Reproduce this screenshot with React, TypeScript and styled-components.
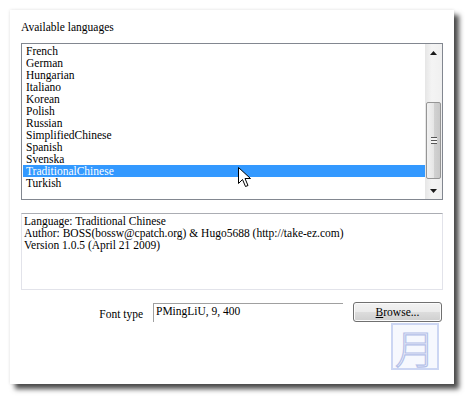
import styled, { createGlobalStyle } from "styled-components"

const GlobalStyle = createGlobalStyle`
  html, body {
    margin: 0;
    padding: 0;
    background: #ffffff;
  }
  body {
    font-family: "Liberation Serif", "Noto Sans CJK TC", serif;
    font-size: 11.5px;
    color: #000;
  }
`

const Stage = styled.div`
  position: relative;
  width: 465px;
  height: 396px;
  padding: 10px 0 0 10px;
  box-sizing: border-box;
`

const Panel = styled.div`
  width: 444px;
  height: 374px;
  box-sizing: border-box;
  padding: 10px 11px 0 11px;
  background: #ffffff;
  box-shadow: 0 0 3px rgba(0, 0, 0, 0.12), 5px 5px 5px rgba(0, 0, 0, 0.7);
  display: flex;
  flex-direction: column;
`

const Title = styled.div`
  line-height: 14px;
  margin-bottom: 9px;
`

const ListBox = styled.div`
  height: 157px;
  border: 1px solid #828790;
  box-sizing: border-box;
  display: flex;
`

const Items = styled.div`
  flex: 1;
  padding: 1px 0 0 1px;
`

const Item = styled.div<{ $selected?: boolean }>`
  height: 12px;
  line-height: 12px;
  padding-left: 3px;
  white-space: nowrap;
  background: ${(p) => (p.$selected ? "#3399ff" : "transparent")};
  color: ${(p) => (p.$selected ? "#ffffff" : "#000000")};
`

const ScrollBar = styled.div`
  width: 17px;
  background: linear-gradient(to right, #e6e6e6, #f4f4f4 40%, #f0f0f0);
  display: flex;
  flex-direction: column;
  align-items: center;
`

const Arrow = styled.div`
  height: 17px;
  width: 17px;
  display: flex;
  align-items: center;
  justify-content: center;
  flex-shrink: 0;
`

const Track = styled.div`
  flex: 1;
  width: 17px;
  display: flex;
  flex-direction: column;
  align-items: center;
`

const Thumb = styled.div`
  margin-top: 41px;
  width: 15px;
  height: 77px;
  box-sizing: border-box;
  border: 1px solid #959595;
  border-radius: 2px;
  background: linear-gradient(to right, #f2f2f2, #e6e6e6 50%, #d2d2d2 51%, #c8c8c8);
  display: flex;
  align-items: center;
  justify-content: center;
`

const Grip = styled.div`
  width: 6px;
  height: 7px;
  background: repeating-linear-gradient(
    to bottom,
    #565656 0,
    #565656 1px,
    #f4f4f4 1px,
    #f4f4f4 3px
  );
`

const InfoBox = styled.div`
  margin-top: 13px;
  height: 77px;
  box-sizing: border-box;
  border: 1px solid #e2e3ea;
  border-top-color: #abadb3;
  padding: 1px 0 0 2px;
  line-height: 12px;
`

const FontRow = styled.div`
  margin-top: 12px;
  display: flex;
  align-items: flex-start;
  justify-content: flex-end;
  padding-right: 1px;
`

const Label = styled.div`
  margin-top: 5px;
  line-height: 14px;
  margin-right: 10px;
`

const FontField = styled.div`
  margin-top: 1px;
  width: 190px;
  height: 19px;
  box-sizing: border-box;
  border-top: 1px solid #a0a0a0;
  border-left: 1px solid #a0a0a0;
  padding: 1px 0 0 2px;
  line-height: 12px;
  margin-right: 10px;
`

const Button = styled.button`
  width: 89px;
  height: 20px;
  box-sizing: border-box;
  border: 1px solid #707070;
  border-radius: 3px;
  background: linear-gradient(to bottom, #f2f2f2, #ebebeb 48%, #dddddd 50%, #cfcfcf);
  font: inherit;
  line-height: 12px;
  padding: 0;
  color: #000;
  box-shadow: inset 0 0 0 1px #fbfbfb;
`

const ImeBadge = styled.div`
  position: absolute;
  left: 391px;
  top: 323px;
  width: 48px;
  height: 47px;
  box-sizing: border-box;
  border: 2px solid #ccd6f3;
  background: #f6f8fe;
  display: flex;
  align-items: center;
  justify-content: center;
  font-family: "Noto Sans CJK TC", sans-serif;
  font-weight: 300;
  font-size: 40px;
  line-height: 1;
  color: #f4f6fd;
  -webkit-text-stroke: 1.2px #b4c0e8;
`

const Cursor = styled.svg`
  position: absolute;
  left: 238px;
  top: 167px;
`

const languages = [
  "French",
  "German",
  "Hungarian",
  "Italiano",
  "Korean",
  "Polish",
  "Russian",
  "SimplifiedChinese",
  "Spanish",
  "Svenska",
  "TraditionalChinese",
  "Turkish",
]

export default function App() {
  return (
    <>
      <GlobalStyle />
      <Stage>
        <Panel>
          <Title>Available languages</Title>
          <ListBox>
            <Items>
              {languages.map((l) => (
                <Item key={l} $selected={l === "TraditionalChinese"}>
                  {l}
                </Item>
              ))}
            </Items>
            <ScrollBar>
              <Arrow>
                <svg width="7" height="4" viewBox="0 0 7 4">
                  <path d="M3.5 0 L7 4 L0 4 Z" fill="#1a1a1a" />
                </svg>
              </Arrow>
              <Track>
                <Thumb>
                  <Grip />
                </Thumb>
              </Track>
              <Arrow>
                <svg width="7" height="4" viewBox="0 0 7 4">
                  <path d="M0 0 L7 0 L3.5 4 Z" fill="#1a1a1a" />
                </svg>
              </Arrow>
            </ScrollBar>
          </ListBox>
          <InfoBox>
            <div>Language: Traditional Chinese</div>
            <div>Author: BOSS(bossw@cpatch.org) &amp; Hugo5688 (http://take-ez.com)</div>
            <div>Version 1.0.5 (April 21 2009)</div>
          </InfoBox>
          <FontRow>
            <Label>Font type</Label>
            <FontField>PMingLiU, 9, 400</FontField>
            <Button>
              <u>B</u>rowse...
            </Button>
          </FontRow>
        </Panel>
        <ImeBadge>月</ImeBadge>
        <Cursor width="14" height="21" viewBox="0 0 14 21">
          <path
            d="M0.5 0.5 L0.5 16.5 L4.5 12.5 L7.5 19.5 L10 18.5 L7 11.5 L12.5 11.5 Z"
            fill="#ffffff"
            stroke="#000000"
            strokeWidth="1"
            strokeLinejoin="miter"
          />
        </Cursor>
      </Stage>
    </>
  )
}
